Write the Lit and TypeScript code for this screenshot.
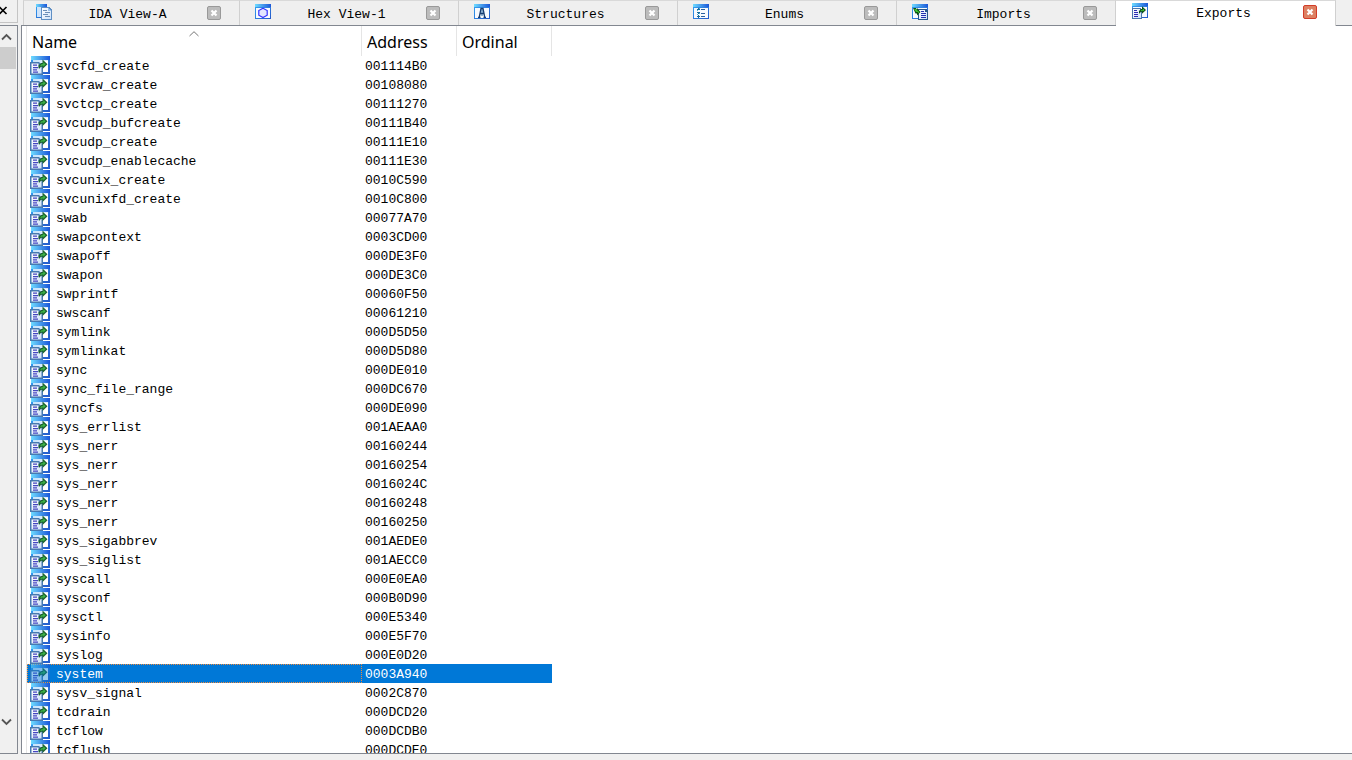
import { LitElement, html, css, svg } from "lit";
import { customElement, property, state } from "lit/decorators.js";
import { classMap } from "lit/directives/class-map.js";

type IconName = "ida" | "hex" | "struct" | "enums" | "imports" | "exports" | "entry";

const gradients = svg`
  <defs>
    <linearGradient id="bar" x1="0" x2="1" y1="0" y2="0">
      <stop offset="0" stop-color="#6fdcff"/><stop offset="1" stop-color="#1a55d8"/>
    </linearGradient>
    <linearGradient id="edge" x1="0" x2="1" y1="0" y2="1">
      <stop offset="0" stop-color="#35a4f4"/><stop offset="1" stop-color="#2458c8"/>
    </linearGradient>
    <linearGradient id="paper" x1="0" x2="1" y1="0" y2="1">
      <stop offset="0" stop-color="#ffffff"/><stop offset="1" stop-color="#cfe2fa"/>
    </linearGradient>
    <linearGradient id="pane" x1="0" x2="1" y1="0" y2="1">
      <stop offset="0" stop-color="#c4e2fb"/><stop offset="1" stop-color="#f6faff"/>
    </linearGradient>
  </defs>`;

const frame = svg`
  <path fill="url(#edge)" d="M0 0h16v15H0z"/>
  <path fill="url(#bar)" d="M0 0h16v3H0z"/>
  <path fill="#f7faff" d="M1 4h14v10H1z"/>`;

const shapes: Record<IconName, unknown> = {
  ida: svg`
    <path fill="url(#edge)" d="M0 0h11v14H0z"/>
    <path fill="url(#bar)" d="M0 0h11v3H0z"/>
    <path fill="#cfe4fb" d="M1 3h9v10H1z"/>
    <path fill="#5f8fc4" d="M5 3h8l3 3v10H5z"/>
    <path fill="url(#paper)" d="M6 4h6v3h3v8H6z"/>
    <path fill="#9cc2ec" d="M12 4l3 3h-3z"/>
    <path fill="#6d8fb8" d="M7 6h4v1H7zM9 8h5v1H9zM7 10h5v1H7zM9 12h5v1H9z"/>`,
  hex: svg`${frame}
    <path fill="#e4e6ff" stroke="#3434ff" stroke-width="1.2" shape-rendering="auto" d="M8 4.200l4.200 2.400v4.600L8 13.600 3.800 11.200V6.600z"/>`,
  struct: svg`${frame}
    <path fill="#8fb4d4" d="M7 5h2v7H7z"/>
    <path fill="none" stroke="#173c70" stroke-width="1.300" shape-rendering="auto" d="M6.500 4.500h3M7 4.500L5.300 13M9 4.500L10.700 13M6 9.500h4M4 13.300h2.500M9.500 13.300H12"/>`,
  enums: svg`${frame}
    <path fill="#176a9c" d="M5 4h1v2H5zM4 5h3v1H4zM5 8h1v2H5zM4 8h3v1H4zM5 11h1v3H5zM4 12h3v1H4z"/>
    <path fill="#42b2db" d="M6 4h1v1H6zM4 6h1v1H4zM6 9h1v1H6zM4 10h1v1H4z"/>
    <path fill="#285fa0" d="M8 5h4v1H8zM8 9h4v1H8zM8 12h4v1H8z"/>`,
  imports: svg`${frame}
    <path fill="#28558c" d="M6 5h8l2 2v9H6z"/>
    <path fill="url(#paper)" d="M7 6h6v2h2v7H7z"/>
    <path fill="#2430b0" d="M9 7h3v1H9zM9 9h5v1H9zM9 11h5v1H9zM9 13h5v1H9z"/>
    <path fill="#0c4c16" shape-rendering="auto" d="M1 4h3l1 2V4l3.500 4L5 11.500V9.500H3.500z"/>
    <path fill="#37c42f" shape-rendering="auto" d="M2 5h2l2 2 1.500 1L6 9.500V8H4z"/>`,
  exports: svg`${frame}
    <path fill="#4a76ac" d="M0 5h8l2 2v9H0z"/>
    <path fill="url(#paper)" d="M1 6h7v2h1v7H1z"/>
    <path fill="#2c2cb4" d="M2 7h3v1H2zM2 9h4v1H2zM2 11h4v1H2zM2 13h4v1H2z"/>
    <path fill="#0c4c16" shape-rendering="auto" d="M10 3.200L14 7l-4 3.800V8.800H9L7.500 10.500H7V8l2-2h1z"/>
    <path fill="#42cf38" shape-rendering="auto" d="M10.800 5.500L12.500 7l-1.700 1.600V7.600L8.200 8.300 9.400 7h1.400z"/>`,
  entry: svg`
    <g shape-rendering="auto">
      <path fill="url(#edge)" d="M1 0h19v18H1z"/>
      <path fill="url(#bar)" d="M1 0h19v4H1z"/>
      <path fill="url(#pane)" d="M3 4h15v12H3z"/>
      <path fill="#fff" d="M13 5h5v11h-5z"/>
      <path fill="#4779b0" d="M0 6h9l4 4v9H0z"/>
      <path fill="url(#paper)" d="M1.500 7.500H8.500V10.500H11.500V17.500H1.500z"/>
      <path fill="#4545c0" d="M3 8.500h4v1.200H3zM3 11h5v1.200H3zM3 13.300h4v1.200H3zM3 15.500h5v1.200H3z"/>
      <path fill="#1c6230" d="M12.500 3.500L17.500 8.300 12.500 13V10.800H11L9.300 12.800 8.500 12V9.500L11 7h1.500z"/>
      <path fill="#3fba48" d="M13.300 6.300L15.600 8.300 13.300 10.500V9.200L10 10.200 11.500 8.300h1.800z"/>
    </g>`,
};

@customElement("ida-icon")
class IdaIcon extends LitElement {
  @property() name: IconName = "exports";

  static styles = css`
    :host { display: block; width: 16px; height: 16px; flex: none; }
    .glyph { display: block; width: 100%; height: 100%; }
  `;

  render() {
    const box = this.name === "entry" ? "0 0 20 19" : "0 0 16 16";
    return html`<svg class="glyph" viewBox=${box}
      shape-rendering="crispEdges" aria-hidden="true">${gradients}${shapes[this.name]}</svg>`;
  }
}

const tabs: { label: string; icon: IconName }[] = [
  { label: "IDA View-A", icon: "ida" },
  { label: "Hex View-1", icon: "hex" },
  { label: "Structures", icon: "struct" },
  { label: "Enums", icon: "enums" },
  { label: "Imports", icon: "imports" },
  { label: "Exports", icon: "exports" },
];

const rows: [string, string][] = [
  ["svcfd_create", "001114B0"],
  ["svcraw_create", "00108080"],
  ["svctcp_create", "00111270"],
  ["svcudp_bufcreate", "00111B40"],
  ["svcudp_create", "00111E10"],
  ["svcudp_enablecache", "00111E30"],
  ["svcunix_create", "0010C590"],
  ["svcunixfd_create", "0010C800"],
  ["swab", "00077A70"],
  ["swapcontext", "0003CD00"],
  ["swapoff", "000DE3F0"],
  ["swapon", "000DE3C0"],
  ["swprintf", "00060F50"],
  ["swscanf", "00061210"],
  ["symlink", "000D5D50"],
  ["symlinkat", "000D5D80"],
  ["sync", "000DE010"],
  ["sync_file_range", "000DC670"],
  ["syncfs", "000DE090"],
  ["sys_errlist", "001AEAA0"],
  ["sys_nerr", "00160244"],
  ["sys_nerr", "00160254"],
  ["sys_nerr", "0016024C"],
  ["sys_nerr", "00160248"],
  ["sys_nerr", "00160250"],
  ["sys_sigabbrev", "001AEDE0"],
  ["sys_siglist", "001AECC0"],
  ["syscall", "000E0EA0"],
  ["sysconf", "000B0D90"],
  ["sysctl", "000E5340"],
  ["sysinfo", "000E5F70"],
  ["syslog", "000E0D20"],
  ["system", "0003A940"],
  ["sysv_signal", "0002C870"],
  ["tcdrain", "000DCD20"],
  ["tcflow", "000DCDB0"],
  ["tcflush", "000DCDE0"],
];

@customElement("app-root")
class AppRoot extends LitElement {
  @state() private active = 5;
  @state() private selected = 32;

  static styles = css`
    :host {
      display: grid;
      grid-template-columns: 18px minmax(0, 1fr);
      column-gap: 3px;
      height: 100vh;
      padding-bottom: 6px;
      box-sizing: border-box;
      overflow: hidden;
      background: #f0f0f0;
      color: #000;
      font: 13px/19px "Liberation Mono", monospace;
    }
    * { box-sizing: border-box; }
    button {
      display: block;
      padding: 0;
      border: 0;
      background: none;
      color: inherit;
      font: inherit;
    }
    svg { display: block; }

    .dock { display: flex; flex-direction: column; gap: 2px; min-height: 0; }
    .dock-title {
      height: 23px;
      flex: none;
      padding-top: 6px;
      border: 1px solid #c4c4c4;
      border-width: 0 1px 1px 0;
    }
    .scroll {
      flex: 1;
      display: flex;
      flex-direction: column;
      border: 1px solid #828790;
      border-left: 0;
      padding-right: 1px;
    }
    .step { height: 21px; width: 100%; flex: none; }
    .step svg { margin-left: 1px; }
    .thumb { height: 22px; background: #cdcdcd; }
    .track { flex: 1; }
    .step.down { height: 42px; padding-bottom: 20px; }

    .main { display: flex; flex-direction: column; min-width: 0; min-height: 0; }
    .tabs { display: flex; height: 25px; flex: none; padding-left: 2px; }
    .tab {
      display: flex;
      flex: 0 1 219px;
      min-width: 0;
      padding: 3px 18px 0 15px;
      border-top: 1px solid #d9d9d9;
      border-right: 1px solid #d0d0d0;
      background: #efefef;
    }
    .tab:first-child { flex-basis: 217px; padding-left: 12px; border-left: 1px solid #d0d0d0; }
    .tab.active { background: #fff; padding: 2px 18px 0 16px; margin-bottom: -1px; z-index: 1; flex-basis: 220px; }
    .label {
      flex: 1;
      min-width: 0;
      height: 21px;
      padding-right: 4px;
      line-height: 21px;
      text-align: center;
      white-space: nowrap;
      overflow: hidden;
    }
    .close {
      width: 14px;
      height: 14px;
      margin-top: 2px;
      flex: none;
      border: 1px solid #999;
      border-radius: 2px;
      background: #bcbcbc;
      color: #fff;
    }
    .active .close { border-color: #d23c28; background: #dd8062; }

    .list {
      flex: 1;
      min-height: 0;
      overflow: hidden;
      background: #fff;
      border: 1px solid #828790;
      border-right: 0;
      padding-left: 4px;
    }
    table { width: 526px; table-layout: fixed; border-collapse: separate; border-spacing: 0; border-left: 1px solid #e5e5e5; }
    th {
      height: 30px;
      padding: 2px 5px 0;
      border-right: 1px solid #e5e5e5;
      text-align: left;
      font: 16px/22px "Noto Sans", sans-serif;
    }
    .col-name { width: 335px; }
    .col-data { width: 95px; }
    .heading { display: grid; grid-template-columns: 1fr; }
    .heading > * { grid-area: 1 / 1; }
    .sort { justify-self: center; align-self: start; }
    td { height: 19px; padding: 0 3px; white-space: nowrap; }
    .cell { display: flex; gap: 6px; height: 19px; line-height: 21px; }
    .cell ida-icon { width: 20px; height: 19px; }
    .selected { background: #0078d7; color: #fff; }
    .selected td:first-child { outline: 1px dotted #f08a3c; outline-offset: -1px; }
    .selected ida-icon { opacity: 0.6; }
  `;

  private cross() {
    return html`<svg width="12" height="12" viewBox="0 0 12 12" aria-hidden="true">
      <path d="M3.500 3.500l5 5M8.500 3.500l-5 5" stroke="currentColor" stroke-width="2.200"/></svg>`;
  }

  render() {
    return html`
      <aside class="dock">
        <div class="dock-title">
          <button aria-label="Close panel">
            <svg width="8" height="9" viewBox="0 0 8 9"><path d="M-.5 1L6.500 8M6.500 1L-.5 8" stroke="#000" stroke-width="1.600"/></svg>
          </button>
        </div>
        <div class="scroll">
          <button class="step" aria-label="Scroll up">
            <svg width="11" height="8" viewBox="0 0 11 8"><path d="M1 6.500L5.500 2 10 6.500" fill="none" stroke="#555" stroke-width="1.800"/></svg>
          </button>
          <div class="thumb"></div>
          <div class="track"></div>
          <button class="step down" aria-label="Scroll down">
            <svg width="11" height="8" viewBox="0 0 11 8"><path d="M1 1.500L5.500 6 10 1.500" fill="none" stroke="#555" stroke-width="1.800"/></svg>
          </button>
        </div>
      </aside>
      <main class="main">
        <nav class="tabs">
          ${tabs.map((t, i) => html`
            <div class=${classMap({ tab: true, active: i === this.active })}>
              <ida-icon name=${t.icon}></ida-icon>
              <button class="label" @click=${() => (this.active = i)}>${t.label}</button>
              <button class="close" aria-label="Close ${t.label}">${this.cross()}</button>
            </div>`)}
        </nav>
        <section class="list">
          <table>
            <colgroup><col class="col-name"><col class="col-data"><col class="col-data"></colgroup>
            <thead>
              <tr>
                <th>
                  <div class="heading">
                    <span>Name</span>
                    <svg class="sort" width="10" height="6" viewBox="0 0 10 6"><path d="M.5 5L5 .7 9.500 5" fill="none" stroke="#777"/></svg>
                  </div>
                </th>
                <th>Address</th>
                <th>Ordinal</th>
              </tr>
            </thead>
            <tbody>
              ${rows.map(([name, address], i) => html`
                <tr class=${classMap({ selected: i === this.selected })} @click=${() => (this.selected = i)}>
                  <td><div class="cell"><ida-icon name="entry"></ida-icon><span>${name}</span></div></td>
                  <td><div class="cell">${address}</div></td>
                  <td></td>
                </tr>`)}
            </tbody>
          </table>
        </section>
      </main>
    `;
  }
}
